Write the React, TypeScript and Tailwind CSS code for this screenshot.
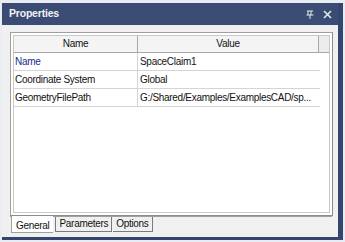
import React from 'react'

const rows = [
  { name: 'Name', value: 'SpaceClaim1', nameColor: 'text-[#1c2a8c]' },
  { name: 'Coordinate System', value: 'Global', nameColor: 'text-[#111]' },
  { name: 'GeometryFilePath', value: 'G:/Shared/Examples/ExamplesCAD/sp...', nameColor: 'text-[#111]' },
]

export default function App() {
  return (
    <div className="w-[345px] h-[242px] bg-[#e9edf3] pt-[3px] pl-[2px] pr-[2px] font-['Liberation_Sans',Arial,sans-serif] text-[10px] tracking-[-0.3px] overflow-hidden">
      <div className="w-[341px] h-[237px] flex flex-col bg-[#34466d] pr-[5px] pb-[3px]">
        {/* title bar */}
        <div className="h-[22px] shrink-0 flex items-center justify-between pl-[7px] pr-[6px] bg-[#3a4c73]">
          <span className="font-bold text-[10.5px] text-[#f0f2f6] tracking-[-0.2px]">Properties</span>
          <div className="flex items-center gap-[9px] text-[#e8ecf2]">
            <svg width="8" height="9" viewBox="0 0 8 9">
              <path d="M1 1h6M2 1v4M5 1v4M0.5 5h7M4 5v4" stroke="#e8ecf2" strokeWidth="1" fill="none" />
            </svg>
            <svg width="9" height="9" viewBox="0 0 9 9">
              <path d="M1 1l7 7M8 1l-7 7" stroke="#e8ecf2" strokeWidth="1.5" />
            </svg>
          </div>
        </div>
        {/* body */}
        <div className="flex-1 bg-[#f0f0f0] flex flex-col pl-[8px] pr-[3px] pt-[7px]">
          <div className="h-[184px] border border-[#a0a0a0] border-r-[#8c8c8c] border-b-[#8c8c8c] bg-white p-[2px] mr-[2px]">
            <div className="h-full border border-[#c8c8c8] flex flex-col">
              <div className="h-[17px] flex bg-[#f4f4f4] border-b border-[#a8a8a8]">
                <div className="w-[124px] border-r border-[#a8a8a8] text-center leading-[16px] text-[#111]">Name</div>
                <div className="w-[181px] border-r border-[#a8a8a8] text-center leading-[16px] text-[#111]">Value</div>
                <div className="flex-1 bg-[#ececec]" />
              </div>
              {rows.map((r) => (
                <div key={r.name} className="h-[18px] flex border-b border-[#d4d4d4] w-[306px]">
                  <div className={`w-[124px] border-r border-[#d4d4d4] pl-[1px] leading-[18px] ${r.nameColor}`}>{r.name}</div>
                  <div className="flex-1 pl-[2px] leading-[18px] text-[#111] whitespace-nowrap">{r.value}</div>
                </div>
              ))}
            </div>
          </div>
          {/* tabs */}
          <div className="flex items-start pl-[1px] border-t border-[#a0a0a0] w-[322px]">
            <div className="h-[17px] bg-white -mt-[1px] px-[4px] leading-[19px] text-[#111] border-l border-b border-[#a0a0a0]">General</div>
            <div className="h-[15px] px-[3px] leading-[14px] text-[#111] border border-t-0 border-[#7a7a7a] bg-[#f0f0f0] ml-[2px]">Parameters</div>
            <div className="h-[15px] px-[3px] leading-[14px] text-[#111] border border-t-0 border-l-0 border-[#7a7a7a] bg-[#f0f0f0] ml-[1px]">Options</div>
          </div>
        </div>
      </div>
    </div>
  )
}
